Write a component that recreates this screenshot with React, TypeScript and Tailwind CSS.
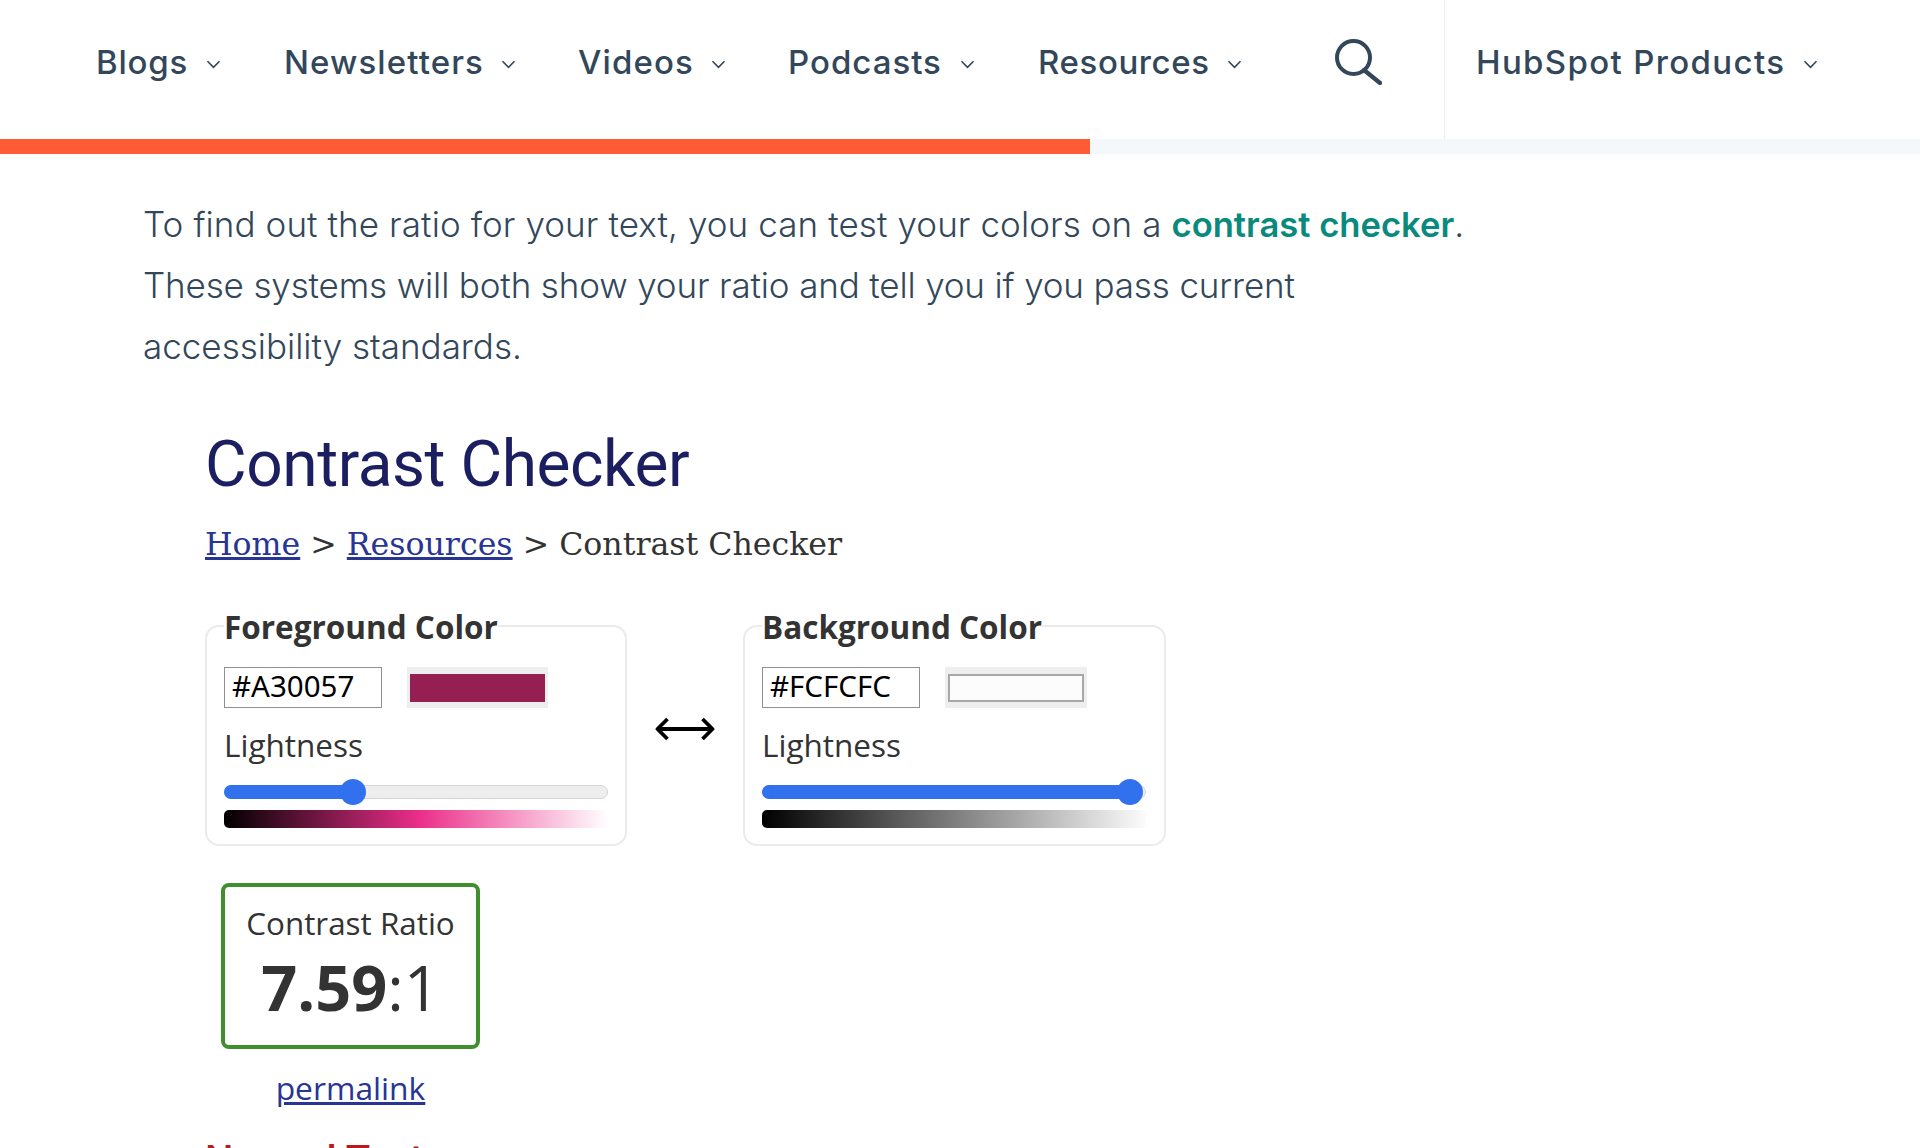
import React from "react";

const navItems = [
  { label: "Blogs", w: "w-[188px]", t: "w-[92px] tracking-[0.8px]" },
  { label: "Newsletters", w: "w-[294px]", t: "w-[199px] tracking-[1.1px]" },
  { label: "Videos", w: "w-[210px]", t: "w-[115px] tracking-[1.1px]" },
  { label: "Podcasts", w: "w-[250px]", t: "w-[154px] tracking-[1px]" },
  { label: "Resources", w: "w-[297px]", t: "w-[171px] tracking-[0.6px]" },
];

function Chevron() {
  return (
    <svg width="15" height="9" viewBox="0 0 15 9" fill="none" className="ml-[18px] mt-[5px] shrink-0">
      <path d="M1.5 1.2 L7.5 7.4 L13.5 1.2" stroke="#33475b" strokeWidth="1.6" />
    </svg>
  );
}

function Slider({ pct }: { pct: number }) {
  return (
    <div className="relative h-[14px] w-[384px] rounded-full border border-[#d4d4d4] bg-[#eeeeee]">
      <div className="absolute -left-px -top-px h-[14px] rounded-full bg-[#3171ee]" style={{ width: `${pct}%` }} />
      <div
        className="absolute top-[-7px] h-[26px] w-[26px] -translate-x-1/2 rounded-full bg-[#3171ee]"
        style={{ left: `${pct}%` }}
      />
    </div>
  );
}

function Panel({
  title,
  hex,
  width,
  swatch,
  pct,
  gradient,
}: {
  title: string;
  hex: string;
  width: string;
  swatch: React.ReactNode;
  pct: number;
  gradient: string;
}) {
  return (
    <fieldset className={`${width} rounded-[14px] border-2 border-[#ebebeb] pb-[16px] pl-[17px] pr-[15px]`}>
      <legend className="h-[40px] px-0 pt-[1px] text-[31.5px] font-bold leading-[40px] text-[#333333]">{title}</legend>
      <div className="mt-[21px] flex items-center gap-[25px]">
        <input
          readOnly
          value={hex}
          className="h-[41px] w-[158px] border border-[#8f8f8f] bg-white pb-[4px] pl-[7px] font-['Noto_Sans',sans-serif] text-[29.5px] leading-[38px] text-black outline-none"
        />
        {swatch}
      </div>
      <div className="mt-[15px] h-[44px] text-[31.5px] font-normal leading-[44px] text-[#333333]">Lightness</div>
      <div className="mt-[18px]">
        <Slider pct={pct} />
      </div>
      <div className={`mt-[11px] h-[18px] w-[384px] rounded-[5px] ${gradient}`} />
    </fieldset>
  );
}

export default function App() {
  return (
    <div className="h-[1148px] w-[1920px] overflow-hidden bg-white font-['Open_Sans',sans-serif] text-[#333333]">
      <header className="flex h-[139px] items-stretch font-['Inter',sans-serif] text-[#33475b]">
        <nav className="flex items-center pb-[16px] pl-[96px]">
          {navItems.map((it) => (
            <a key={it.label} className={`${it.w} flex items-center`}>
              <span className={`${it.t} whitespace-nowrap text-[33px] font-medium leading-[40px]`}>{it.label}</span>
              <Chevron />
            </a>
          ))}
        </nav>
        <div className="flex items-center">
          <svg width="47" height="46" viewBox="0 0 47 46" fill="none" className="mb-[16px]">
            <circle cx="18.5" cy="18.5" r="16.5" stroke="#33475b" strokeWidth="4" />
            <path d="M29 31 L45 44" stroke="#33475b" strokeWidth="4.2" strokeLinecap="round" />
          </svg>
        </div>
        <div className="ml-[62px] flex items-center border-l border-[#eaf0f6] pb-[16px] pl-[31px]">
          <span className="w-[309px] whitespace-nowrap text-[33px] font-medium leading-[40px] tracking-[1.35px]">
            HubSpot Products
          </span>
          <Chevron />
        </div>
      </header>

      <div className="h-[15px] w-full bg-[#f5f8fa]">
        <div className="h-full w-[1090px] bg-[#ff5c35]" />
      </div>

      <main className="pl-[143px] pt-[40px]">
        <p className="w-[1400px] font-['Inter',sans-serif] text-[35px] font-light leading-[61px] text-[#33475b]">
          <span className="tracking-[0.09px]">To find out the ratio for your text, you can test your colors on a </span>
          <a className="text-[34.6px] font-semibold text-[#0a8a7d]">contrast checker</a>.
          <br />
          <span className="tracking-[-0.15px]">These systems will both show your ratio and tell you if you pass current</span>
          <br />
          accessibility standards.
        </p>

        <section className="pl-[62px] pt-[49px]">
          <h1 className="font-['Roboto',sans-serif] text-[64px] font-[450] leading-[77px] tracking-[-0.45px] text-[#1b1f62]">
            Contrast Checker
          </h1>
          <div className="mt-[21px] font-['DejaVu_Serif',serif] text-[31.6px] leading-[40px] text-[#333333]">
            <a className="text-[#283593] underline">Home</a> &gt; <a className="text-[#283593] underline">Resources</a>{" "}
            &gt; Contrast Checker
          </div>

          <div className="mt-[42px] flex">
            <Panel
              title="Foreground Color"
              hex="#A30057"
              width="w-[422px]"
              pct={33.4}
              gradient="bg-[linear-gradient(to_right,#000000,#ec2e8a_51%,#ffffff)]"
              swatch={
                <div className="flex h-[41px] w-[141px] items-center justify-center bg-[#eeeeee]">
                  <div className="h-[28px] w-[135px] bg-[#951e52]" />
                </div>
              }
            />
            <div className="flex w-[116px] items-center justify-center pt-[5px]">
              <svg width="60" height="26" viewBox="0 0 60 26" fill="none">
                <path
                  d="M2.5 13 H57.5 M12.5 3 L2.5 13 L12.5 23 M47.5 3 L57.5 13 L47.5 23"
                  stroke="#000000"
                  strokeWidth="3.8"
                  strokeLinejoin="round"
                />
              </svg>
            </div>
            <Panel
              title="Background Color"
              hex="#FCFCFC"
              width="w-[423px]"
              pct={96.2}
              gradient="bg-[linear-gradient(to_right,#000000,#fcfcfc)]"
              swatch={
                <div className="flex h-[41px] w-[142px] items-center justify-center bg-[#eeeeee]">
                  <div className="h-[28px] w-[136px] border-2 border-[#a8a8a8] bg-[#fcfcfc]" />
                </div>
              }
            />
          </div>

          <div className="ml-[16px] mt-[37px] flex h-[166px] w-[259px] flex-col items-center rounded-[8px] border-4 border-[#3f8f2f]">
            <div className="mt-[15px] text-[31.4px] leading-[42px]">Contrast Ratio</div>
            <div className="mt-[1px] text-[63px] leading-[84px]">
              <span className="font-bold">7.59</span>:1
            </div>
          </div>
          <div className="ml-[16px] mt-[17px] w-[259px] text-center">
            <a className="text-[31.8px] leading-[44px] text-[#283593] underline">permalink</a>
          </div>
          <h2 className="mt-[27px] font-['Roboto',sans-serif] text-[40px] font-medium leading-[48px] text-[#b71c1c]">
            Normal Text
          </h2>
        </section>
      </main>
    </div>
  );
}
